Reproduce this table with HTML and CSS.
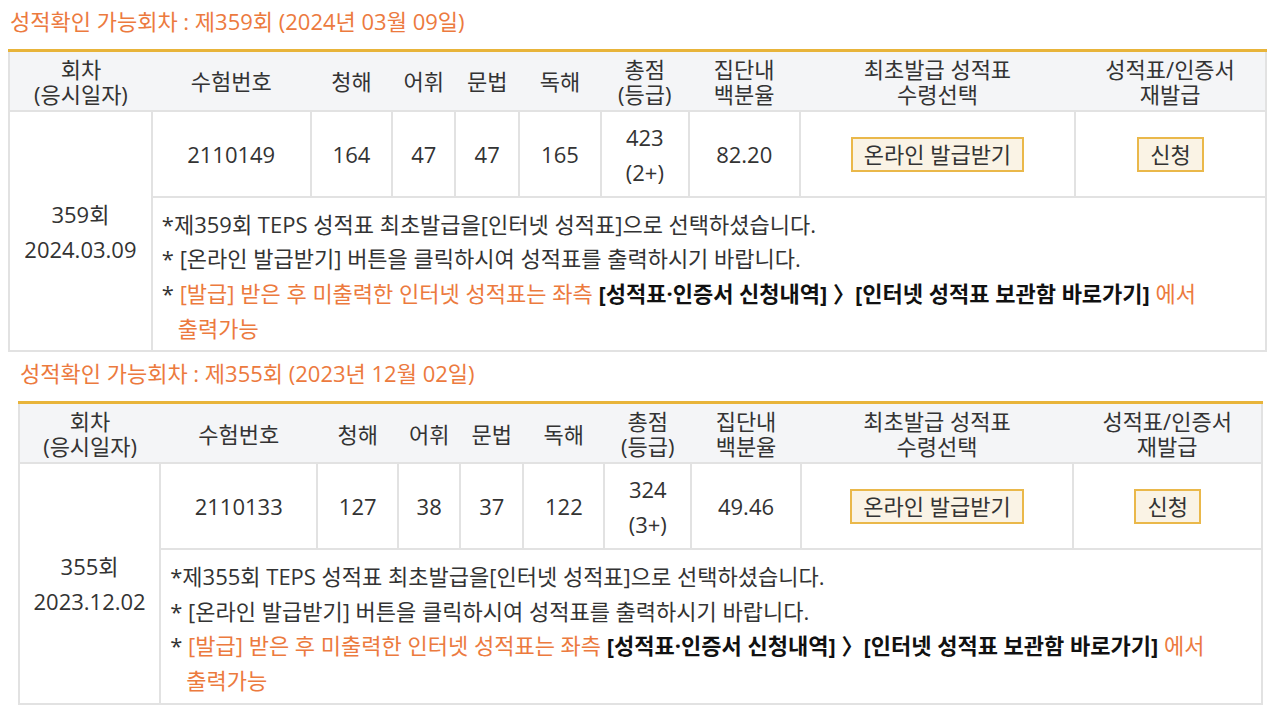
FILE: index.html
```html
<!DOCTYPE html>
<html lang="ko">
<head>
<meta charset="utf-8">
<title>성적확인</title>
<link rel="stylesheet" href="styles.css">
</head>
<body>
<section class="round round-first">
  <h2 class="round-title">성적확인 가능회차 : 제359회 (2024년 03월 09일)</h2>
  <table class="score-table">
    <colgroup>
      <col class="c-round"><col class="c-id"><col class="c-lc"><col class="c-vo"><col class="c-gr"><col class="c-rc"><col class="c-total"><col class="c-pct"><col class="c-issue"><col class="c-reissue">
    </colgroup>
    <thead>
      <tr><th>회차<br>(응시일자)</th><th>수험번호</th><th>청해</th><th>어휘</th><th>문법</th><th>독해</th><th>총점<br>(등급)</th><th>집단내<br>백분율</th><th>최초발급 성적표<br>수령선택</th><th>성적표/인증서<br>재발급</th></tr>
    </thead>
    <tbody>
      <tr class="row-data">
        <td rowspan="2" class="cell-round">359회<br>2024.03.09</td>
        <td>2110149</td><td>164</td><td>47</td><td>47</td><td>165</td><td>423<br>(2+)</td><td>82.20</td>
        <td><button class="btn" type="button">온라인 발급받기</button></td>
        <td><button class="btn" type="button">신청</button></td>
      </tr>
      <tr>
        <td colspan="9" class="cell-notes">
          <p>*제359회 TEPS 성적표 최초발급을[인터넷 성적표]으로 선택하셨습니다.</p>
          <p>* [온라인 발급받기] 버튼을 클릭하시여 성적표를 출력하시기 바랍니다.</p>
          <p class="note-hang">* <span class="hl">[발급] 받은 후 미출력한 인터넷 성적표는 좌측 </span><strong>[성적표·인증서 신청내역] 〉[인터넷 성적표 보관함 바로가기]</strong><span class="hl"> 에서<br>출력가능</span></p>
        </td>
      </tr>
    </tbody>
  </table>
</section>
<section class="round round-second">
  <h2 class="round-title">성적확인 가능회차 : 제355회 (2023년 12월 02일)</h2>
  <table class="score-table">
    <colgroup>
      <col class="c-round"><col class="c-id"><col class="c-lc"><col class="c-vo"><col class="c-gr"><col class="c-rc"><col class="c-total"><col class="c-pct"><col class="c-issue"><col class="c-reissue">
    </colgroup>
    <thead>
      <tr><th>회차<br>(응시일자)</th><th>수험번호</th><th>청해</th><th>어휘</th><th>문법</th><th>독해</th><th>총점<br>(등급)</th><th>집단내<br>백분율</th><th>최초발급 성적표<br>수령선택</th><th>성적표/인증서<br>재발급</th></tr>
    </thead>
    <tbody>
      <tr class="row-data">
        <td rowspan="2" class="cell-round">355회<br>2023.12.02</td>
        <td>2110133</td><td>127</td><td>38</td><td>37</td><td>122</td><td>324<br>(3+)</td><td>49.46</td>
        <td><button class="btn" type="button">온라인 발급받기</button></td>
        <td><button class="btn" type="button">신청</button></td>
      </tr>
      <tr>
        <td colspan="9" class="cell-notes">
          <p>*제355회 TEPS 성적표 최초발급을[인터넷 성적표]으로 선택하셨습니다.</p>
          <p>* [온라인 발급받기] 버튼을 클릭하시여 성적표를 출력하시기 바랍니다.</p>
          <p class="note-hang">* <span class="hl">[발급] 받은 후 미출력한 인터넷 성적표는 좌측 </span><strong>[성적표·인증서 신청내역] 〉[인터넷 성적표 보관함 바로가기]</strong><span class="hl"> 에서<br>출력가능</span></p>
        </td>
      </tr>
    </tbody>
  </table>
</section>
</body>
</html>
```

FILE: styles.css
```css
* { box-sizing: border-box; }

body {
  margin: 0;
  background: #ffffff;
  font-family: "Open Sans", "Noto Sans CJK KR", sans-serif;
  font-size: 22px;
  color: #333333;
}

.round { padding-left: 8px; }
.round-first { padding-top: 6px; }
.round-second { padding-left: 18px; padding-top: 6px; }

.round-title {
  margin: 0 0 13px 2px;
  font-size: 22px;
  font-weight: 400;
  line-height: 30px;
  color: #ec7a3e;
}

.score-table {
  border-collapse: collapse;
  table-layout: fixed;
  width: 1259px;
  border: 2px solid #e2e2e2;
  border-top: 3px solid #e8b43a;
}
.round-second .score-table { width: 1245px; }

.c-round { width: 11.36%; }
.c-id { width: 12.63%; }
.c-lc { width: 6.51%; }
.c-vo { width: 5%; }
.c-gr { width: 5.08%; }
.c-rc { width: 6.51%; }
.c-total { width: 6.99%; }
.c-pct { width: 8.82%; }
.c-issue { width: 21.92%; }
.c-reissue { width: 15.17%; }

.score-table th {
  background: #f4f5f7;
  font-weight: 400;
  line-height: 25px;
  height: 60px;
  padding: 2px 0 0;
  text-align: center;
  color: #333333;
  border-top: 3px solid #e8b43a;
  border-bottom: 2px solid #e2e2e2;
}

.score-table td {
  border: 2px solid #e2e2e2;
  text-align: center;
  padding: 0;
  line-height: 35px;
  vertical-align: middle;
}

.row-data td { height: 86px; padding-top: 2px; }

.score-table .cell-notes {
  text-align: left;
  padding: 9px 9px 5px;
  line-height: 34.7px;
}
.cell-notes p { margin: 0; }
.note-hang { padding-left: 16px; text-indent: -16px; }
.hl { color: #ec7a3e; }
.cell-notes strong { color: #111111; font-weight: 700; }

.btn {
  font: inherit;
  color: #333333;
  background: #faf3e5;
  border: 2px solid #eab84a;
  border-radius: 0;
  padding: 0 11px;
  height: 35px;
  line-height: 31px;
  cursor: pointer;
}
```
